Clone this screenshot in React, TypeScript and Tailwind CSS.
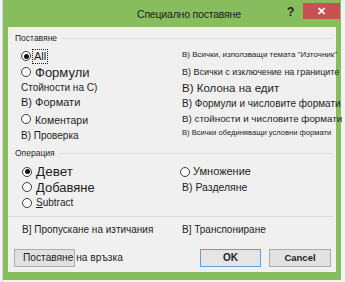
const Radio = ({ on }: { on?: boolean }) => (
  <span className="w-[10px] h-[10px] rounded-full border border-[#3c3c3c] bg-white flex items-center justify-center shrink-0">
    {on && <span className="w-[5px] h-[5px] rounded-full bg-[#111]" />}
  </span>
)

const Group = ({ label }: { label: string }) => (
  <div className="flex items-center h-[12px]">
    <span className="pl-[7px] pr-[4px] text-[8.5px] leading-none text-[#1e1e1e]">{label}</span>
    <div className="flex-1 h-px bg-[#dcdcdc] mr-[3px]" />
  </div>
)

const App = () => {
  return (
    <div className="w-[345px] h-[282px] bg-[#f3f3f3] flex font-['Liberation_Sans',sans-serif] text-[#1e1e1e] overflow-hidden">
      <div className="w-[3px] h-full border-r border-[#d6d6d6]" />

      {/* WINDOW */}
      <div className="w-[338px] h-[280px] bg-[#87bd5c] flex flex-col">

        {/* TITLE */}
        <div className="flex h-[27px] shrink-0">
          <span className="ml-[134px] mt-[9px] w-[150px] text-[10.5px] tracking-[-0.2px] leading-none text-[#222] whitespace-nowrap">Специално поставяне</span>
          <span className="mt-[6px] w-[14px] text-[12px] font-bold leading-none text-[#222]">?</span>
          <div className="ml-[2px] mt-[3px] w-[37px] h-[16px] bg-[#c75050] flex items-center justify-center text-white text-[11px] font-bold leading-none">✕</div>
        </div>

        {/* CONTENT */}
        <div className="ml-[5px] w-[328px] h-[245px] bg-[#f0f0f0] flex flex-col whitespace-nowrap">

          <div className="mt-[5px]">
            <Group label="Поставяне" />
          </div>

          <div className="flex h-[98px] mt-[2px]">
            <div className="w-[174px] shrink-0 pl-[13px] pt-[2px] flex flex-col">
              <div className="h-[16px] flex items-center gap-[2px]">
                <Radio on />
                <span className="text-[11px] leading-none px-[1px] py-[1px] outline outline-1 outline-dotted outline-[#222]">All</span>
              </div>
              <div className="h-[16px] flex items-center gap-[4px]">
                <Radio />
                <span className="text-[13px] leading-none">Формули</span>
              </div>
              <div className="h-[15px] flex items-center text-[10px] leading-none">Стойности на С)</div>
              <div className="h-[15px] flex items-center text-[11px] leading-none">В) Формати</div>
              <div className="h-[17px] flex items-center gap-[4px]">
                <Radio />
                <span className="text-[10.5px] leading-none mt-[3px]">Коментари</span>
              </div>
              <div className="h-[17px] flex items-center text-[10px] leading-none">В) Проверка</div>
            </div>

            <div className="flex-1 flex flex-col">
              <div className="h-[17px] flex items-center text-[8px] leading-none">В) Всички, използващи темата "Източник"</div>
              <div className="h-[18px] flex items-center text-[9px] leading-none">В) Всички с изключение на границите</div>
              <div className="h-[15px] flex items-center text-[11.5px] leading-none">В) Колона на едит</div>
              <div className="h-[15px] flex items-center text-[10px] leading-none">В) Формули и числовите формати</div>
              <div className="h-[15px] flex items-center text-[9.8px] leading-none">В) стойности и числовите формати</div>
              <div className="h-[14px] flex items-center text-[7.6px] leading-none">В) Всички обединяващи условни формати</div>
            </div>
          </div>

          <div className="mt-[3px]">
            <Group label="Операция" />
          </div>

          <div className="flex h-[46px] mt-[5px]">
            <div className="w-[174px] shrink-0 pl-[14px] flex flex-col">
              <div className="h-[15px] flex items-center gap-[4px]">
                <Radio on />
                <span className="text-[13.5px] leading-none">Девет</span>
              </div>
              <div className="h-[16px] flex items-center gap-[4px]">
                <Radio />
                <span className="text-[13px] leading-none">Добавяне</span>
              </div>
              <div className="h-[15px] flex items-center gap-[4px]">
                <Radio />
                <span className="text-[10px] leading-none"><u>S</u>ubtract</span>
              </div>
            </div>
            <div className="flex-1 flex flex-col">
              <div className="h-[15px] flex items-center gap-[3px] -ml-[2px]">
                <Radio />
                <span className="text-[11px] leading-none">Умножение</span>
              </div>
              <div className="h-[16px] flex items-center text-[10.5px] leading-none">В) Разделяне</div>
            </div>
          </div>

          <div className="mt-[6px] h-px bg-[#dcdcdc] mr-[3px]" />

          <div className="flex h-[14px] mt-[6px] text-[10px] leading-none items-center">
            <span className="w-[174px] shrink-0 pl-[14px]">В] Пропускане на изтичания</span>
            <span>В] Транспониране</span>
          </div>

          {/* BUTTONS */}
          <div className="flex h-[18px] mt-[12px] text-[10.2px] leading-none">
            <button className="ml-[6px] w-[61px] h-[18px] bg-[#e1e1e1] border border-[#acacac] flex items-center pl-[8px] overflow-visible whitespace-nowrap">
              Поставяне на връзка
            </button>
            <button className="ml-auto w-[61px] h-[18px] bg-[#e5e5e5] border border-[#5e9fdc] font-bold text-[10px]">OK</button>
            <button className="ml-[8px] mr-[5px] w-[62px] h-[18px] bg-[#e1e1e1] border border-[#acacac] font-bold text-[9.5px]">Cancel</button>
          </div>
        </div>
      </div>
    </div>
  )
}

export default App
